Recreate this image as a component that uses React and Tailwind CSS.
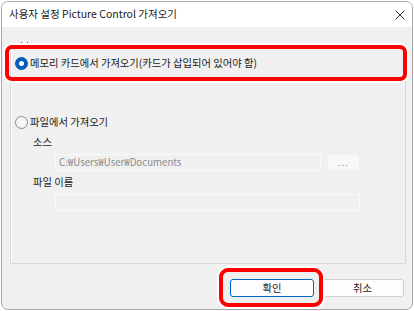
import React from 'react';

const font = 'font-["Noto_Sans_CJK_KR","Noto_Sans",sans-serif]';

function Radio({ checked, label }) {
  return (
    <div className="flex items-center h-[14px]">
      {checked ? (
        <span className="w-[13px] h-[13px] rounded-full bg-[#005fb8] flex items-center justify-center">
          <span className="w-[5px] h-[5px] rounded-full bg-white" />
        </span>
      ) : (
        <span className="w-[13px] h-[13px] rounded-full border border-[#8a8a8a] bg-[#f6f6f6]" />
      )}
      <span className="ml-[2px] text-[10.3px] leading-[14px] text-[#1a1a1a]">{label}</span>
    </div>
  );
}

export default function App() {
  return (
    <div className={`w-[414px] h-[311px] bg-white relative ${font}`}>
      <div className="absolute left-[1px] top-[1px] w-[412px] h-[309px] border border-[#a8a8a8] rounded-[7px] overflow-hidden flex flex-col bg-[#f0f0f0]">
        <div className="h-[25px] bg-white flex items-center justify-between pl-[7px] pr-[7px]">
          <span className="text-[10.5px] text-[#1a1a1a] leading-none">사용자 설정 Picture Control 가져오기</span>
          <svg width="10" height="10" viewBox="0 0 10 10" className="mt-[1px]">
            <path d="M0.5 0.5 L9.5 9.5 M9.5 0.5 L0.5 9.5" stroke="#333" strokeWidth="1" />
          </svg>
        </div>

        <div className="flex-1 flex flex-col">
          <div className="ml-[8px] mt-[18px] w-[396px] h-[219px] border border-[#d8d8d8] shadow-[inset_1px_1px_0_#ffffff] rounded-[2px] pl-[4px] flex flex-col">
            <div className="mt-[10px]">
              <Radio checked label="메모리 카드에서 가져오기(카드가 삽입되어 있어야 함)" />
            </div>
            <div className="mt-[45px]">
              <Radio label="파일에서 가져오기" />
            </div>
            <div className="ml-[18px] mt-[6px] text-[10.3px] leading-[14px] text-[#1a1a1a]">소스</div>
            <div className="flex items-center mt-[5px] ml-[40px]">
              <div className="w-[266px] h-[17px] border border-[#fafafa] bg-[#f0f0f0] flex items-center pl-[3px] text-[9.7px] text-[#8a8a8a]">
                C:₩Users₩User₩Documents
              </div>
              <div className="ml-[7px] w-[31px] h-[15px] rounded-[3px] bg-[#f8f8f8] flex items-end justify-center pb-[3px] text-[9px] leading-none text-[#9a9a9a] tracking-[1px]">
                ...
              </div>
            </div>
            <div className="ml-[18px] mt-[4px] text-[10.3px] leading-[14px] text-[#1a1a1a]">파일 이름</div>
            <div className="mt-[5px] ml-[40px] w-[305px] h-[17px] border border-[#fafafa] bg-[#f0f0f0]" />
          </div>

          <div className="flex justify-end gap-[7px] mt-[15px] pr-[8px]">
            <div className="w-[84px] h-[18px] rounded-[3px] border border-[#0067c0] bg-[#fdfdfd] flex items-center justify-center text-[10.3px] text-[#1a1a1a]">
              확인
            </div>
            <div className="w-[83px] h-[18px] rounded-[3px] border border-[#d0d0d0] bg-[#fdfdfd] flex items-center justify-center text-[10.3px] text-[#1a1a1a]">
              취소
            </div>
          </div>
        </div>
      </div>

      <div className="absolute left-[21px] top-[42px] w-[7px] flex justify-between">
        <span className="w-[1px] h-[2px] bg-[#555]" />
        <span className="w-[1px] h-[2px] bg-[#555]" />
      </div>

      <div className="absolute left-[5px] top-[45px] w-[402px] h-[36px] rounded-[7px] border-[4px] border-[#ff0000] shadow-[0_0_0_2px_#ffffff]" />
      <div className="absolute left-[219px] top-[268px] w-[104px] h-[39px] rounded-[9px] border-[4px] border-[#ff0000] shadow-[0_0_0_2px_#ffffff]" />
    </div>
  );
}
